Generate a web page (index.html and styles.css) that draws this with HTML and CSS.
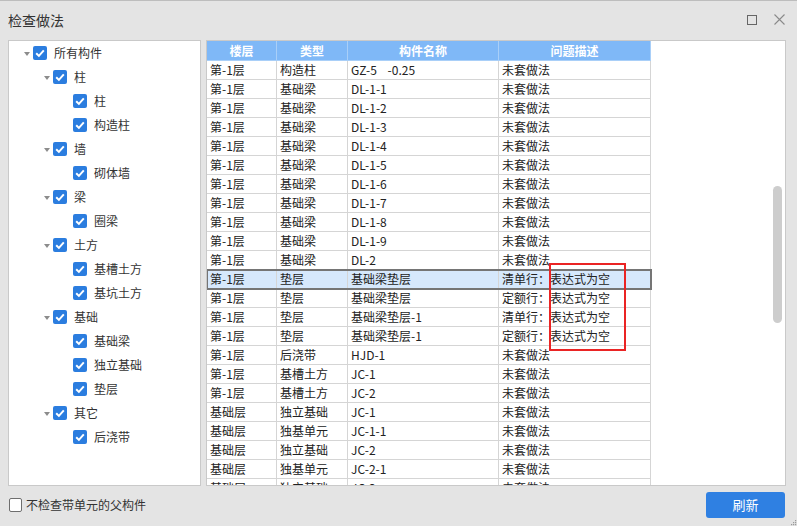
FILE: index.html
```html
<!DOCTYPE html>
<html lang="zh">
<head>
<meta charset="utf-8">
<title>检查做法</title>
<link rel="stylesheet" href="styles.css">
</head>
<body>
<div class="window">
  <div class="titlebar">
    <span class="title">检查做法</span>
    <div class="controls">
      <span class="max"></span>
      <svg class="close" width="11" height="11" viewBox="0 0 11 11"><path d="M0.5 0.5 L10.5 10.5 M10.5 0.5 L0.5 10.5" stroke="#8a8a8a" stroke-width="1.1" fill="none"/></svg>
    </div>
  </div>
  <div class="main">
    <div class="tree">
      <div class="node l0"><span class="exp"><i class="arrow"></i></span><span class="cb"><svg width="14" height="14" viewBox="0 0 14 14"><path d="M3.2 7.2 L5.9 9.9 L10.8 4.4" stroke="#fff" stroke-width="2" fill="none"/></svg></span><span class="label">所有构件</span></div>
      <div class="node l1"><span class="exp"><i class="arrow"></i></span><span class="cb"><svg width="14" height="14" viewBox="0 0 14 14"><path d="M3.2 7.2 L5.9 9.9 L10.8 4.4" stroke="#fff" stroke-width="2" fill="none"/></svg></span><span class="label">柱</span></div>
      <div class="node l2"><span class="exp"></span><span class="cb"><svg width="14" height="14" viewBox="0 0 14 14"><path d="M3.2 7.2 L5.9 9.9 L10.8 4.4" stroke="#fff" stroke-width="2" fill="none"/></svg></span><span class="label">柱</span></div>
      <div class="node l2"><span class="exp"></span><span class="cb"><svg width="14" height="14" viewBox="0 0 14 14"><path d="M3.2 7.2 L5.9 9.9 L10.8 4.4" stroke="#fff" stroke-width="2" fill="none"/></svg></span><span class="label">构造柱</span></div>
      <div class="node l1"><span class="exp"><i class="arrow"></i></span><span class="cb"><svg width="14" height="14" viewBox="0 0 14 14"><path d="M3.2 7.2 L5.9 9.9 L10.8 4.4" stroke="#fff" stroke-width="2" fill="none"/></svg></span><span class="label">墙</span></div>
      <div class="node l2"><span class="exp"></span><span class="cb"><svg width="14" height="14" viewBox="0 0 14 14"><path d="M3.2 7.2 L5.9 9.9 L10.8 4.4" stroke="#fff" stroke-width="2" fill="none"/></svg></span><span class="label">砌体墙</span></div>
      <div class="node l1"><span class="exp"><i class="arrow"></i></span><span class="cb"><svg width="14" height="14" viewBox="0 0 14 14"><path d="M3.2 7.2 L5.9 9.9 L10.8 4.4" stroke="#fff" stroke-width="2" fill="none"/></svg></span><span class="label">梁</span></div>
      <div class="node l2"><span class="exp"></span><span class="cb"><svg width="14" height="14" viewBox="0 0 14 14"><path d="M3.2 7.2 L5.9 9.9 L10.8 4.4" stroke="#fff" stroke-width="2" fill="none"/></svg></span><span class="label">圈梁</span></div>
      <div class="node l1"><span class="exp"><i class="arrow"></i></span><span class="cb"><svg width="14" height="14" viewBox="0 0 14 14"><path d="M3.2 7.2 L5.9 9.9 L10.8 4.4" stroke="#fff" stroke-width="2" fill="none"/></svg></span><span class="label">土方</span></div>
      <div class="node l2"><span class="exp"></span><span class="cb"><svg width="14" height="14" viewBox="0 0 14 14"><path d="M3.2 7.2 L5.9 9.9 L10.8 4.4" stroke="#fff" stroke-width="2" fill="none"/></svg></span><span class="label">基槽土方</span></div>
      <div class="node l2"><span class="exp"></span><span class="cb"><svg width="14" height="14" viewBox="0 0 14 14"><path d="M3.2 7.2 L5.9 9.9 L10.8 4.4" stroke="#fff" stroke-width="2" fill="none"/></svg></span><span class="label">基坑土方</span></div>
      <div class="node l1"><span class="exp"><i class="arrow"></i></span><span class="cb"><svg width="14" height="14" viewBox="0 0 14 14"><path d="M3.2 7.2 L5.9 9.9 L10.8 4.4" stroke="#fff" stroke-width="2" fill="none"/></svg></span><span class="label">基础</span></div>
      <div class="node l2"><span class="exp"></span><span class="cb"><svg width="14" height="14" viewBox="0 0 14 14"><path d="M3.2 7.2 L5.9 9.9 L10.8 4.4" stroke="#fff" stroke-width="2" fill="none"/></svg></span><span class="label">基础梁</span></div>
      <div class="node l2"><span class="exp"></span><span class="cb"><svg width="14" height="14" viewBox="0 0 14 14"><path d="M3.2 7.2 L5.9 9.9 L10.8 4.4" stroke="#fff" stroke-width="2" fill="none"/></svg></span><span class="label">独立基础</span></div>
      <div class="node l2"><span class="exp"></span><span class="cb"><svg width="14" height="14" viewBox="0 0 14 14"><path d="M3.2 7.2 L5.9 9.9 L10.8 4.4" stroke="#fff" stroke-width="2" fill="none"/></svg></span><span class="label">垫层</span></div>
      <div class="node l1"><span class="exp"><i class="arrow"></i></span><span class="cb"><svg width="14" height="14" viewBox="0 0 14 14"><path d="M3.2 7.2 L5.9 9.9 L10.8 4.4" stroke="#fff" stroke-width="2" fill="none"/></svg></span><span class="label">其它</span></div>
      <div class="node l2"><span class="exp"></span><span class="cb"><svg width="14" height="14" viewBox="0 0 14 14"><path d="M3.2 7.2 L5.9 9.9 L10.8 4.4" stroke="#fff" stroke-width="2" fill="none"/></svg></span><span class="label">后浇带</span></div>
    </div>
    <div class="grid-panel">
      <div class="grid">
        <div class="row head"><span>楼层</span><span>类型</span><span>构件名称</span><span>问题描述</span></div>
        <div class="row"><span>第-1层</span><span>构造柱</span><span class="pre">GZ-5    -0.25</span><span>未套做法</span></div>
        <div class="row"><span>第-1层</span><span>基础梁</span><span>DL-1-1</span><span>未套做法</span></div>
        <div class="row"><span>第-1层</span><span>基础梁</span><span>DL-1-2</span><span>未套做法</span></div>
        <div class="row"><span>第-1层</span><span>基础梁</span><span>DL-1-3</span><span>未套做法</span></div>
        <div class="row"><span>第-1层</span><span>基础梁</span><span>DL-1-4</span><span>未套做法</span></div>
        <div class="row"><span>第-1层</span><span>基础梁</span><span>DL-1-5</span><span>未套做法</span></div>
        <div class="row"><span>第-1层</span><span>基础梁</span><span>DL-1-6</span><span>未套做法</span></div>
        <div class="row"><span>第-1层</span><span>基础梁</span><span>DL-1-7</span><span>未套做法</span></div>
        <div class="row"><span>第-1层</span><span>基础梁</span><span>DL-1-8</span><span>未套做法</span></div>
        <div class="row"><span>第-1层</span><span>基础梁</span><span>DL-1-9</span><span>未套做法</span></div>
        <div class="row"><span>第-1层</span><span>基础梁</span><span>DL-2</span><span>未套做法</span></div>
        <div class="row selected"><span>第-1层</span><span>垫层</span><span>基础梁垫层</span><span>清单行：表达式为空</span></div>
        <div class="row"><span>第-1层</span><span>垫层</span><span>基础梁垫层</span><span>定额行：表达式为空</span></div>
        <div class="row"><span>第-1层</span><span>垫层</span><span>基础梁垫层-1</span><span>清单行：表达式为空</span></div>
        <div class="row"><span>第-1层</span><span>垫层</span><span>基础梁垫层-1</span><span>定额行：表达式为空</span></div>
        <div class="row"><span>第-1层</span><span>后浇带</span><span>HJD-1</span><span>未套做法</span></div>
        <div class="row"><span>第-1层</span><span>基槽土方</span><span>JC-1</span><span>未套做法</span></div>
        <div class="row"><span>第-1层</span><span>基槽土方</span><span>JC-2</span><span>未套做法</span></div>
        <div class="row"><span>基础层</span><span>独立基础</span><span>JC-1</span><span>未套做法</span></div>
        <div class="row"><span>基础层</span><span>独基单元</span><span>JC-1-1</span><span>未套做法</span></div>
        <div class="row"><span>基础层</span><span>独立基础</span><span>JC-2</span><span>未套做法</span></div>
        <div class="row"><span>基础层</span><span>独基单元</span><span>JC-2-1</span><span>未套做法</span></div>
        <div class="row"><span>基础层</span><span>独立基础</span><span>JC-3</span><span>未套做法</span></div>
      </div>
      <div class="scroll-thumb"></div>
      <div class="mark"></div>
    </div>
  </div>
  <div class="footer">
    <label class="opt"><span class="box"></span><span>不检查带单元的父构件</span></label>
    <button class="btn">刷新</button>
    <svg class="grip" width="7" height="7" viewBox="0 0 7 7"><g fill="#9a9a9a"><rect x="5" y="1" width="1.2" height="1.2"/><rect x="3" y="3" width="1.2" height="1.2"/><rect x="5" y="3" width="1.2" height="1.2"/><rect x="1" y="5" width="1.2" height="1.2"/><rect x="3" y="5" width="1.2" height="1.2"/><rect x="5" y="5" width="1.2" height="1.2"/></g></svg>
  </div>
</div>
</body>
</html>
```

FILE: styles.css
```css
* { box-sizing: border-box; }
html, body { margin: 0; padding: 0; }
body {
  width: 797px;
  height: 526px;
  overflow: hidden;
  background: #e4e4e4;
  font-family: "Noto Sans CJK SC", "Noto Sans", sans-serif;
  font-size: 12px;
  color: #222;
}
.window {
  width: 797px;
  height: 526px;
  display: flex;
  flex-direction: column;
  position: relative;
  border-top: 1px solid #bdbdbd;
}
.titlebar {
  height: 39px;
  display: flex;
  align-items: center;
  justify-content: space-between;
  padding: 0 12px 0 8px;
}
.title {
  font-size: 14px;
  color: #333;
  line-height: 16px;
  margin-top: -2px;
}
.controls {
  display: flex;
  align-items: center;
  gap: 17px;
  margin-top: -2px;
}
.max {
  width: 10px;
  height: 10px;
  border: 1px solid #666;
}
.close { display: block; }
.main {
  height: 446px;
  display: flex;
  gap: 5px;
  padding-left: 8px;
}
.tree {
  width: 193px;
  height: 446px;
  background: #fff;
  border: 1px solid #c9c9c9;
  padding-top: 0;
}
.node {
  height: 24px;
  display: flex;
  align-items: center;
  color: #333;
}
.exp {
  display: flex;
  justify-content: flex-end;
  align-items: center;
  padding-right: 3px;
  flex: none;
}
.l0 .exp { width: 24px; }
.l1 .exp { width: 44px; }
.l2 .exp { width: 64px; }
.arrow {
  width: 0;
  height: 0;
  border-left: 3px solid transparent;
  border-right: 3px solid transparent;
  border-top: 4px solid #8c8c8c;
  margin-top: 1px;
}
.cb {
  width: 14px;
  height: 14px;
  background: #2b7ddf;
  border-radius: 2px;
  flex: none;
}
.cb svg { display: block; }
.label {
  margin-left: 7px;
  line-height: 16px;
}
.grid-panel {
  width: 580px;
  height: 446px;
  background: #fff;
  border: 1px solid #c9c9c9;
  position: relative;
  overflow: hidden;
}
.grid {
  width: 444px;
  display: flex;
  flex-direction: column;
}
.row {
  display: grid;
  grid-template-columns: 70px 71px 151px 152px;
  height: 19px;
}
.row span {
  border-right: 1px solid #d5d5d5;
  border-bottom: 1px solid #d5d5d5;
  padding-left: 3px;
  line-height: 18px;
  white-space: nowrap;
  overflow: hidden;
}
.row .pre { white-space: pre; }
.row.head { height: 20px; }
.row.head span {
  background: #7fb8f7;
  color: #fff;
  font-weight: bold;
  text-align: center;
  padding-left: 0;
  line-height: 19px;
  border-right: 1px solid #a9cff8;
  border-bottom: 1px solid #a9cff8;
}
.row.selected {
  background: #d6e8fc;
  outline: 2px solid #757575;
  outline-offset: -1px;
  position: relative;
  z-index: 1;
}
.scroll-thumb {
  position: absolute;
  left: 566px;
  top: 145px;
  width: 9px;
  height: 137px;
  border-radius: 5px;
  background: #cdcdcd;
}
.mark {
  position: absolute;
  left: 342px;
  top: 222px;
  width: 77px;
  height: 88px;
  border: 2px solid #ea2424;
  z-index: 2;
}
.footer {
  height: 40px;
  display: flex;
  align-items: center;
  justify-content: space-between;
  padding: 0 12px 0 9px;
  position: relative;
}
.opt {
  display: flex;
  align-items: center;
  color: #333;
  margin-top: -3px;
}
.box {
  width: 13px;
  height: 14px;
  border: 1px solid #6e6e6e;
  border-radius: 2px;
  background: #fff;
  margin-right: 4px;
}
.btn {
  width: 79px;
  height: 26px;
  border: none;
  border-radius: 3px;
  background: #2f80e2;
  color: #fff;
  font-family: "Noto Sans CJK SC", sans-serif;
  font-size: 13px;
  padding: 0;
  margin-top: -3px;
}
.grip {
  position: absolute;
  right: 0;
  bottom: 0;
}
```
